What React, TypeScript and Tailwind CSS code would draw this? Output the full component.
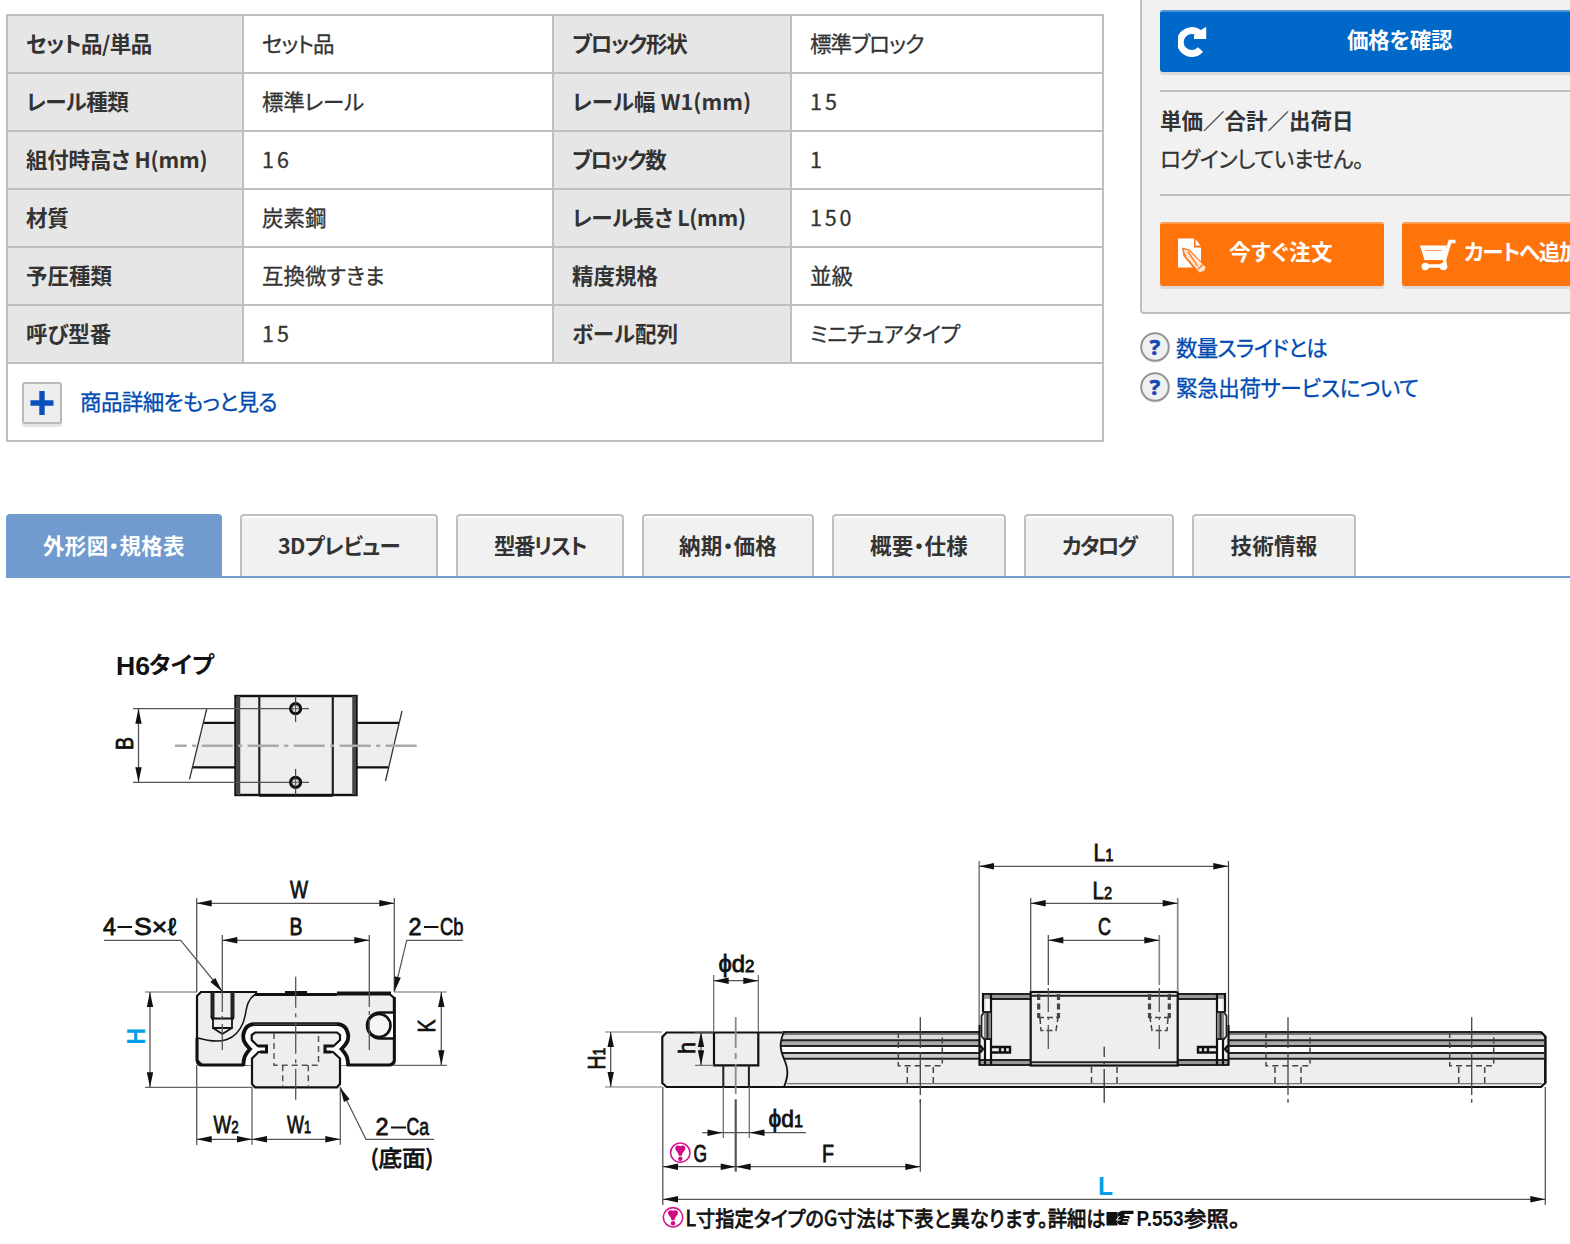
import React from "react";

type Cell = [string, string];

const specs: [Cell, Cell, Cell, Cell][] = [
  [["セット品/単品", "tracking-[-0.55px]"], ["セット品", "tracking-[-1px]"], ["ブロック形状", "tracking-[-1.3px]"], ["標準ブロック", "tracking-[-0.9px]"]],
  [["レール種類", "tracking-[-0.5px]"], ["標準レール", "tracking-[-0.3px]"], ["レール幅 W1(mm)", "tracking-[0.1px]"], ["15", "tracking-[3px]"]],
  [["組付時高さ H(mm)", "tracking-[-0.2px]"], ["16", "tracking-[3px]"], ["ブロック数", "tracking-[-1.5px]"], ["1", ""]],
  [["材質", "tracking-[-0.2px]"], ["炭素鋼", ""], ["レール長さ L(mm)", "tracking-[-0.3px]"], ["150", "tracking-[2.8px]"]],
  [["予圧種類", ""], ["互換微すきま", ""], ["精度規格", ""], ["並級", ""]],
  [["呼び型番", ""], ["15", "tracking-[3px]"], ["ボール配列", ""], ["ミニチュアタイプ", "tracking-[-0.3px]"]],
];

const stroke = "[-webkit-text-stroke:0.3px_currentColor]";

function SpecTable() {
  return (
    <div className="w-[1098px] h-[428px] border-2 border-[#bfbfbf] text-[#333]">
      {specs.map((r) => (
        <div
          key={r[0][0]}
          className="grid h-[58px] grid-cols-[236px_310px_238px_310px] border-b-2 border-[#bfbfbf] leading-[53px]"
        >
          <div className={"border-r-2 border-[#bfbfbf] bg-[#e6e6e6] pl-[18px] font-bold " + r[0][1]}>{r[0][0]}</div>
          <div className={"border-r-2 border-[#bfbfbf] pl-[18px] " + stroke + " " + r[1][1]}>{r[1][0]}</div>
          <div className={"border-r-2 border-[#bfbfbf] bg-[#e6e6e6] pl-[18px] font-bold " + r[2][1]}>{r[2][0]}</div>
          <div className={"pl-[18px] " + stroke + " " + r[3][1]}>{r[3][0]}</div>
        </div>
      ))}
      <div className="flex h-[76px] items-center pl-[14px] text-[#004bb1]">
        <span className="mt-[2px] flex h-[42px] w-10 items-center justify-center rounded-[3px] border-2 border-[#b9b9b9] bg-[#eee] shadow-[0_3px_1px_#e4e4e4]">
          <svg width="24" height="24" viewBox="0 0 24 24">
            <path d="M9.3 0h5.4v9.300h8.800v5.400h-8.800v9.300h-5.400v-9.300h-8.800v-5.400h8.800z" fill="#0a50bd" />
          </svg>
        </span>
        <span className={"pb-[3px] pl-[18px] tracking-[-0.6px] " + stroke}>商品詳細をもっと見る</span>
      </div>
    </div>
  );
}

function HelpIcon() {
  return (
    <svg width="30" height="32" viewBox="0 0 30 32" className="mt-[2px]">
      <circle cx="15" cy="16.500" r="14" fill="#ddd" />
      <circle cx="15" cy="15" r="13.800" fill="#f0f0f0" stroke="#959595" strokeWidth="2" />
      <text x="15" y="22.500" textAnchor="middle" fontSize="22" fontWeight="700" fontFamily="Open Sans, sans-serif" fill="#1646b0" stroke="#1646b0" strokeWidth="0.6">
        ?
      </text>
    </svg>
  );
}

function OrderPanel() {
  return (
    <div className="w-[430px] shrink-0">
      <div className="h-[314px] w-[520px] rounded-bl-[4px] border-2 border-t-0 border-[#bfbfbf] bg-[#f1f1f1] px-[18px] pt-[10px] text-[#333]">
        <div className="flex h-[62px] items-center rounded-[3px] border-t-2 border-[#4d97d9] bg-[#0068c8] pl-[18px] font-bold text-white shadow-[0_3px_0_#d9d9d9]">
          <svg width="30" height="32" viewBox="0 0 30 32">
            <path d="M21.500 7.500A11.500 11.500 0 1 0 22.500 23.500" fill="none" stroke="#fff" strokeWidth="6.800" />
            <path d="M28.200 0.800V13H16V9.500L22 4.500z" fill="#fff" />
          </svg>
          <span className="pb-[7px] pl-[139px] tracking-[-0.3px]">価格を確認</span>
        </div>
        <div className="mt-[18px] h-[106px] border-y-2 border-[#bfbfbf] pt-[9px] leading-[38px]">
          <div className="font-bold">単価／合計／出荷日</div>
          <div className={"tracking-[-0.3px] " + stroke}>ログインしていません。</div>
        </div>
        <div className="mt-[26px] flex gap-[18px] font-bold text-white">
          <div className="flex h-16 w-[224px] items-center rounded-[3px] border-t-2 border-[#ff9d54] bg-[#ff730b] pl-[18px] shadow-[0_3px_0_#dadada]">
            <svg width="28" height="36" viewBox="0 0 28 36">
              <path d="M0 1.500h16v9h7v20H0z" fill="#fff" />
              <path d="M17.500 2L22.500 8.500h-5z" fill="#fff" />
              <path d="M4 10.500l7.500 2L28.500 30l-3.500 7-6-1.500L5.500 19z" fill="#ff730b" />
              <path d="M5.500 12.500l5 0.800L27.500 30l-1 3.500-5 2L8 19.500z" fill="#ffe3cf" />
              <path d="M10 14.500L19.500 29M20 32l5-4.500" stroke="#ff730b" strokeWidth="1.200" />
            </svg>
            <span className="pb-[8px] pl-[23px] tracking-[0.6px]">今すぐ注文</span>
          </div>
          <div className="flex h-16 w-[224px] shrink-0 items-center rounded-[3px] border-t-2 border-[#ff9d54] bg-[#ff730b] pl-[18px] shadow-[0_3px_0_#dadada]">
            <svg width="36" height="32" viewBox="0 0 36 32">
              <path d="M0 6.500h27L24 21H4.500z" fill="#fff" />
              <path d="M5 11.500h17" stroke="#ff730b" strokeWidth="1" opacity=".7" />
              <path d="M35.500 2.500h-5.500L24.500 21L25.500 27H5" fill="none" stroke="#fff" strokeWidth="3.400" />
              <circle cx="5.300" cy="27.500" r="3.700" fill="#fff" />
              <circle cx="23.500" cy="27.500" r="3.700" fill="#fff" />
            </svg>
            <span className="whitespace-nowrap pb-[8px] pl-[8px] tracking-[-1.2px]">カートへ追加</span>
          </div>
        </div>
      </div>
      <div className={"flex flex-col gap-2 pt-[17px] text-[#004bb1] " + stroke}>
        <div className="flex h-8 items-center gap-[6px]">
          <HelpIcon />
          <span className="tracking-[-0.8px]">数量スライドとは</span>
        </div>
        <div className="flex h-8 items-center gap-[6px]">
          <HelpIcon />
          <span className="tracking-[-0.35px]">緊急出荷サービスについて</span>
        </div>
      </div>
    </div>
  );
}

const tab =
  "flex h-[62px] items-center justify-center rounded-t-[4px] border-2 border-b-0 border-[#bfbfbf] bg-[#f1f1f1] pb-[2px] shadow-[inset_0_2px_0_#fff]";

function Tabs() {
  return (
    <div className="ml-[6px] flex h-16 gap-[18px] border-b-2 border-[#719bce] font-bold text-[#333]">
      <div className="flex h-[62px] w-[216px] items-center justify-center rounded-t-[4px] bg-[#719bce] tracking-[0.3px] text-white">外形図・規格表</div>
      <div className={tab + " w-[198px] tracking-[-0.7px]"}>3Dプレビュー</div>
      <div className={tab + " w-[168px] tracking-[-1.5px]"}>型番リスト</div>
      <div className={tab + " w-[172px] tracking-[0.2px]"}>納期・価格</div>
      <div className={tab + " w-[174px] tracking-[0.2px]"}>概要・仕様</div>
      <div className={tab + " w-[150px] tracking-[-2px]"}>カタログ</div>
      <div className={tab + " w-[164px] tracking-[0.2px]"}>技術情報</div>
    </div>
  );
}

type P = { x1: number; y1: number; x2: number; y2: number };

// Arrowhead whose tip is at (x, y), pointing along `deg`.
const Head = ({ x, y, deg }: { x: number; y: number; deg: number }) => (
  <path d="M0 0L-15 -3.200V3.200z" fill="#111" transform={`translate(${x} ${y}) rotate(${deg})`} />
);

const Line = ({ x1, y1, x2, y2, c = "#555", w = 1.3, d }: P & { c?: string; w?: number; d?: string }) => (
  <line x1={x1} y1={y1} x2={x2} y2={y2} stroke={c} strokeWidth={w} strokeDasharray={d} />
);

const Dim = (p: P) => {
  const deg = (Math.atan2(p.y2 - p.y1, p.x2 - p.x1) * 180) / Math.PI;
  return (
    <g>
      <Line {...p} />
      <Head x={p.x1} y={p.y1} deg={deg + 180} />
      <Head x={p.x2} y={p.y2} deg={deg} />
    </g>
  );
};

// Label stretched to width w, starting at x on baseline y, with an optional small index.
const Label = ({
  x, y, w, t, sub, s = 24, c = "#111", b, jp, rot,
}: { x: number; y: number; w: number; t: string; sub?: string; s?: number; c?: string; b?: boolean; jp?: boolean; rot?: boolean }) => (
  <text
    x={rot ? 0 : x}
    y={rot ? 0 : y}
    transform={rot ? `translate(${x} ${y}) rotate(-90)` : undefined}
    textLength={w}
    lengthAdjust="spacingAndGlyphs"
    fontSize={s}
    fontWeight={b ? 700 : 400}
    fill={c}
    stroke={b ? "none" : c}
    strokeWidth={0.8}
    fontFamily={jp ? "Noto Sans CJK JP, sans-serif" : "Liberation Sans, Noto Sans CJK JP, sans-serif"}
  >
    {t}
    {sub && <tspan fontSize={17}>{sub}</tspan>}
  </text>
);

const Notice = ({ x, y }: { x: number; y: number }) => (
  <g transform={`translate(${x} ${y})`}>
    <circle r="9.700" fill="#fff" stroke="#d5148c" strokeWidth="1.600" />
    <path d="M-5 -4.500C-5 -7.500 -1.500 -7.500 0 -6.500C1.500 -7.500 5 -7.500 5 -4.500C5 -1.800 2 -0.800 1.500 3H-1.500C-2 -0.800 -5 -1.800 -5 -4.500z" fill="#cf0a83" />
    <circle cy="6" r="2.200" fill="#cf0a83" />
  </g>
);

function TopView() {
  return (
    <g>
      <Label x={116} y={674.5} w={34} t="H6" s={25} b />
      <Label x={149} y={673} w={65} t="タイプ" s={23} b jp />
      <path d="M204 723H399L388 767H193z" fill="#eee" />
      <g stroke="#111" strokeWidth="2.200">
        <path d="M203.500 722.800H236M357 722.800H399M192.500 767.300H236M357 767.300H388" />
      </g>
      <path d="M206.700 709L189.500 779.300M402 711L385.500 781" stroke="#333" strokeWidth="1.300" />
      <rect x="235.500" y="696" width="121" height="99" fill="#eee" stroke="#111" strokeWidth="2.400" />
      <path d="M238.500 696V795M354 696V795" stroke="#444" strokeWidth="3.500" />
      <path d="M259.300 696V795M332.800 696V795" stroke="#222" strokeWidth="2.200" />
      <path d="M259 795.500H333" stroke="#111" strokeWidth="2.600" />
      <path d="M175 745.700H417" stroke="#aaa" strokeWidth="2.600" strokeDasharray="31 5.500 4 5.500" strokeDashoffset="19.300" />
      {[708.7, 782.3].map((y) => (
        <g key={y}>
          <Line x1={133} y1={y} x2={309} y2={y} />
          <circle cx="295.600" cy={y} r="5" fill="#ddd" stroke="#111" strokeWidth="3.200" />
          <path d={`M291 ${y}h9M295.600 ${y - 4.5}v9`} stroke="#555" />
        </g>
      ))}
      <path d="M295.600 696V704M295.600 714V722M295.600 769V777M295.600 788V795" stroke="#444" strokeWidth="1.200" />
      <Dim x1={138.5} y1={708.7} x2={138.5} y2={782.3} />
      <Label x={132.5} y={750} w={13} t="B" s={24} rot />
    </g>
  );
}

function FrontView() {
  return (
    <g>
      <g fill="none" stroke="#111" strokeWidth="2.200">
        <path d="M201 992H256V994.500H390L394.300 998V1061L390 1065H202L197 1060V996z" fill="#eee" />
        <path
          d="M243 1067V1058L251 1049L242.500 1040V1030L249 1024H342L349 1030V1040L340.500 1049L349 1058V1067z"
          fill="#fff"
          stroke="none"
        />
        <path d="M242 1065.500H350" stroke="#888" strokeWidth="1.200" />
        <path d="M197 1038V1060Q197.500 1065 202 1065H244M347 1065H390Q394 1065 394.300 1061V997" strokeWidth="3" />
        <path d="M255 994.500H337M285 992.500H307M337 993H391" strokeWidth="3.200" />
        <path
          d="M243.300 1066C243.500 1058 244.500 1055 250 1049C244 1043 243 1040 243.300 1035Q245 1024.500 254 1024.200H337.500Q346.500 1024.500 348.200 1035C348.500 1040 347.500 1043 341.500 1049C347 1055 348 1058 348.200 1066"
          strokeWidth="3.800"
        />
        <path d="M254 1024.200H337" stroke="#555" strokeWidth="1" />
        <path
          d="M255 1032.500H337L340 1035V1040L333.700 1046H325V1052H333L340 1058.500V1084L337 1087.300H255L252 1084V1058.500L258.500 1052H266.500V1046H257.700L251.700 1040V1035z"
          fill="#eee"
        />
        <path d="M258 1046H266.500V1052H260M333.500 1046H325V1052H331.500" strokeWidth="3" />
        <path d="M255 994.500C245 1001 247 1013 243 1023C236 1040 222 1045 198 1038" strokeWidth="1.500" />
        <path d="M212.500 992V1018M232.500 992V1018" stroke="#222" strokeWidth="4" />
        <path d="M211 1018.500H234M213 1018V1028H232V1018M213 1028L222.300 1034L232 1028" strokeWidth="1.800" />
        <path d="M393 1012.500H380V1038.500H393z" fill="#fff" stroke="none" />
        <path d="M394 1012.500H380A12.500 12.500 0 0 0 380 1038.500H394" strokeWidth="2.500" />
        <circle cx="379" cy="1025.500" r="11.500" fill="#f4f4f4" strokeWidth="2.600" />
      </g>
      <g fill="none" stroke="#555" strokeWidth="1.500" strokeDasharray="6 4">
        <path d="M274 1033V1065.300H318.500V1033M282.700 1065.300V1087M308.300 1065.300V1087" />
      </g>
      <Line x1={295.7} y1={976.7} x2={295.7} y2={1100} d="31 5.500 4 5.500" />
      <Line x1={196.7} y1={898} x2={196.7} y2={992} />
      <Line x1={196.7} y1={1065} x2={196.7} y2={1145} />
      <Line x1={394.3} y1={898} x2={394.3} y2={992} />
      <Line x1={222.3} y1={935} x2={222.3} y2={1050} d="77 4 4 4" />
      <Line x1={369.3} y1={935} x2={369.3} y2={1050} d="72 4 4 4" />
      <Dim x1={196.7} y1={903.3} x2={394.3} y2={903.3} />
      <Dim x1={222.3} y1={940.3} x2={369.3} y2={940.3} />
      <Label x={290} y={898} w={18} t="W" />
      <Label x={289.500} y={935} w={13} t="B" />
      <Label x={103} y={934.500} w={13} t="4" s={24} />
      <path d="M117.500 927H132M424 927H438.500M391 1127.500H406" stroke="#111" strokeWidth="2" />
      <Label x={134} y={934.500} w={42} t="S×ℓ" s={24} />
      <Label x={408.500} y={934.500} w={13} t="2" s={24} />
      <Label x={440} y={934.500} w={23.500} t="Cb" s={24} />
      <path d="M104 940.300H180.700L222 991M462.700 940.300H406.700L394.500 991" fill="none" stroke="#555" strokeWidth="1.200" />
      <Head x={222.3} y={991.7} deg={51} />
      <Head x={394.3} y={991.7} deg={103} />
      <path d="M145 992H197M145 1087.300H252M394 992H446.700M394 1065.300H446.700" stroke="#666" strokeWidth="1.200" />
      <Dim x1={150} y1={992} x2={150} y2={1087.3} />
      <Dim x1={441.3} y1={992} x2={441.3} y2={1065.3} />
      <Label x={144.700} y={1044.500} w={16.500} t="H" s={25} c="#009fe8" b rot />
      <Label x={434.500} y={1032.500} w={13} t="K" rot />
      <path d="M252 1087V1144.700M340.300 1087V1144.700" stroke="#555" strokeWidth="1.200" />
      <Dim x1={196.7} y1={1139.3} x2={252} y2={1139.3} />
      <Dim x1={252} y1={1139.3} x2={340.3} y2={1139.3} />
      <Label x={213.500} y={1133} w={25} t="W" sub="2" />
      <Label x={287} y={1133} w={24} t="W" sub="1" />
      <path d="M434 1139.300H366L340.500 1088" fill="none" stroke="#555" strokeWidth="1.200" />
      <Head x={340} y={1087.3} deg={243} />
      <Label x={375.500} y={1135} w={13} t="2" s={24} />
      <Label x={406.500} y={1135} w={22.500} t="Ca" s={24} />
      <Label x={370.500} y={1166} w={63} t="(底面)" s={22} jp />
    </g>
  );
}

// Hidden counterbored hole drawn with dashed edges around centre x.
const HiddenHole = ({ x }: { x: number }) => (
  <g fill="none" stroke="#444" strokeWidth="1.500" strokeDasharray="6 4">
    <path d={`M${x - 22} 1032V1065.700H${x + 22}V1032`} />
    <path d={`M${x - 13} 1067V1087M${x + 13} 1067V1087`} />
    <path d={`M${x} 1017.300V1048M${x} 1052V1095M${x} 1099V1102.700`} strokeWidth="1.300" strokeDasharray="none" />
  </g>
);

// Left half of the carriage; the right half is its mirror image.
const CarriageHalf = () => (
  <g>
    <path d="M982 993H1031V1065.500H979V1025H982z" fill="#eee" />
    <path d="M986 999H990V1060H986z" fill="#fff" />
    <rect x="982" y="993" width="49" height="6" fill="#999" />
    <rect x="979" y="1060" width="52" height="5.500" fill="#999" />
    <path d="M982 994H1031M991 999H1031M979 1065H1031M979 1060H1031" stroke="#222" strokeWidth="1.800" />
    <path d="M983 993V1012M991 993V1065.500M979.500 1025V1065.500M985 1040V1065" stroke="#111" strokeWidth="2.200" />
    <rect x="984" y="1012" width="7" height="27" fill="#888" />
    <path d="M991 1012H984L981.500 1016V1036L984 1039H991M987.500 1013V1038" fill="none" stroke="#222" strokeWidth="1.800" />
    <path d="M991 1047H1010V1052.500H991M1000 1047V1052.500M1005 1047V1052.500" fill="none" stroke="#111" strokeWidth="2.400" />
    <path d="M980 1045.500L983 1049L980 1052.500" fill="none" stroke="#111" strokeWidth="2.500" />
  </g>
);

const Thread = () => (
  <g fill="none" stroke="#444">
    <path d="M1038.700 994V1018M1058.500 994V1018" strokeWidth="3.200" strokeDasharray="6 3.500" />
    <path d="M1038 1017.500H1059M1040 1018L1041 1030.500H1056L1058 1018" strokeWidth="1.500" strokeDasharray="6 3" />
  </g>
);

function SideView() {
  return (
    <g>
      <path d="M666.500 1032.500H1541L1545.300 1037V1083L1541 1087H666.500L662.300 1083V1037z" fill="#eee" stroke="#111" strokeWidth="2.200" />
      <path d="M783 1033.500H1543L1544.500 1037V1059H783Q781 1052 780.500 1043z" fill="#fff" />
      <rect x="782" y="1032" width="760" height="3" fill="#777" />
      <rect x="782" y="1035" width="762" height="5" fill="#ddd" />
      <rect x="781" y="1040" width="764" height="6" fill="#aaa" />
      <rect x="783" y="1053" width="762" height="5.500" fill="#ccc" />
      <path d="M783 1032H1541M781 1040.300H1544M781 1046H1544M781.500 1053H1544M784 1058.700H1544" stroke="#222" strokeWidth="1.900" />
      <path d="M1541 1032L1545.300 1036.500V1083" fill="none" stroke="#111" strokeWidth="2.200" />
      <path d="M787 1083.700H1542" stroke="#777" strokeWidth="1.200" />
      <path d="M784 1032C779 1043 780 1049 784 1059C789 1070 788 1077 784 1087" fill="none" stroke="#111" strokeWidth="1.800" />
      <path d="M714 1032.500V1065.300H758.300V1032.500" fill="none" stroke="#111" strokeWidth="2.200" />
      <path d="M723.300 1065V1087M748.900 1065V1087" stroke="#222" strokeWidth="2" />
      <path d="M723.300 1087V1138M749.300 1087V1138M713.700 975V1032M758.300 975V1032" stroke="#666" strokeWidth="1.200" />
      <path d="M735.700 1017V1048M735.700 1053V1059M735.700 1064V1094" stroke="#888" strokeWidth="1.800" />
      <path d="M735.700 1099.300V1171.700" stroke="#555" strokeWidth="2.200" />
      <path d="M920.300 1100V1171.700M662.800 1087V1205M1545.300 1087V1205" stroke="#555" strokeWidth="1.300" />
      <HiddenHole x={920.3} />
      <HiddenHole x={1288} />
      <HiddenHole x={1471.7} />

      <CarriageHalf />
      <g transform="translate(2208 0) scale(-1 1)">
        <CarriageHalf />
      </g>
      <rect x="1030.700" y="992" width="147" height="73.500" fill="#eee" stroke="#111" strokeWidth="2.200" />
      <path d="M1031 995.700H1177M1031 1062.300H1177" stroke="#222" strokeWidth="2" />
      <Thread />
      <g transform="translate(2208 0) scale(-1 1)">
        <Thread />
      </g>
      <path d="M1091.500 1067V1087M1117 1067V1087" stroke="#444" strokeWidth="1.500" strokeDasharray="6 4" />
      <path d="M1104.200 1046.700V1057M1104.200 1061V1064M1104.200 1069V1102.700" stroke="#333" strokeWidth="1.300" />

      <path d="M979.200 861V1025M1177.700 898V992M1159.300 935V985" stroke="#888" strokeWidth="1.700" />
      <path d="M1228.500 861V1025M1030.700 898V992M1048.300 935V985" stroke="#444" strokeWidth="1.200" />
      <path d="M1048.300 988V1012M1159.300 988V1012M1048.300 1017V1020M1159.300 1017V1020M1048.300 1025V1049M1159.300 1025V1049" stroke="#555" strokeWidth="1.300" />
      <Dim x1={979} y1={866.3} x2={1228.3} y2={866.3} />
      <Dim x1={1030.7} y1={903.3} x2={1177.7} y2={903.3} />
      <Dim x1={1048.3} y1={940.3} x2={1159.3} y2={940.3} />
      <Label x={1093.500} y={861} w={20} t="L" sub="1" />
      <Label x={1092.500} y={898.500} w={19.500} t="L" sub="2" />
      <Label x={1098} y={935} w={13} t="C" />

      <Dim x1={713.7} y1={980.7} x2={758.3} y2={980.7} />
      <Label x={718.500} y={972.300} w={36} t="ϕd" sub="2" />
      <path d="M605 1032H662M605 1087H662M695 1032H714M695 1065.300H714" stroke="#777" strokeWidth="1.200" />
      <Dim x1={610.7} y1={1032} x2={610.7} y2={1087} />
      <Dim x1={701} y1={1032} x2={701} y2={1065.3} />
      <Label x={604.500} y={1069.500} w={21.500} t="H" sub="1" rot />
      <Label x={694.500} y={1054} w={12} t="h" rot />
      <path d="M702.300 1132.700H806" stroke="#555" strokeWidth="1.200" />
      <Head x={722.5} y={1132.7} deg={0} />
      <Head x={749.5} y={1132.7} deg={180} />
      <Label x={768.500} y={1127.300} w={34.500} t="ϕd" sub="1" />
      <Dim x1={663} y1={1166.7} x2={735.7} y2={1166.7} />
      <Dim x1={735.7} y1={1166.7} x2={920.3} y2={1166.7} />
      <Dim x1={663} y1={1199.3} x2={1545.3} y2={1199.3} />
      <Notice x={680.3} y={1152.7} />
      <Label x={693.500} y={1161.500} w={13.500} t="G" />
      <Label x={822} y={1161.500} w={12} t="F" />
      <Label x={1098} y={1194.500} w={15} t="L" s={25} c="#009fe8" b />
      <Notice x={673} y={1217.3} />
      <Label x={685.500} y={1225.500} w={420} t="L寸指定タイプのG寸法は下表と異なります。詳細は" s={21} jp />
      <g transform="translate(1106.500 1210)">
        <path d="M0 2H11V15.500H0z" fill="#111" />
        <path d="M11 3L15 0.800H27V4H18V6H23V9H22V12H21V15H13L11 13z" fill="#111" />
        <path d="M13 6L10 10H14M17 8.500H22M16 11.700H21" stroke="#fff" strokeWidth="1" fill="none" />
      </g>
      <Label x={1136.500} y={1225.500} w={47} t="P.553" s={22} b />
      <Label x={1184} y={1225.500} w={56} t="参照。" s={21} jp />
    </g>
  );
}

export default function App() {
  return (
    <div
      className="h-[1244px] w-[1570px] overflow-hidden bg-white text-[21.5px] leading-none"
      style={{ fontFamily: '"Noto Sans CJK JP", sans-serif', fontFeatureSettings: '"palt"' }}
    >
      <div className="flex h-[514px] gap-[36px] pl-[6px]">
        <div className="pt-[14px]">
          <SpecTable />
        </div>
        <OrderPanel />
      </div>
      <Tabs />
      <svg width="1570" height="666" viewBox="0 578 1570 666" className="block">
        <TopView />
        <FrontView />
        <SideView />
      </svg>
    </div>
  );
}
